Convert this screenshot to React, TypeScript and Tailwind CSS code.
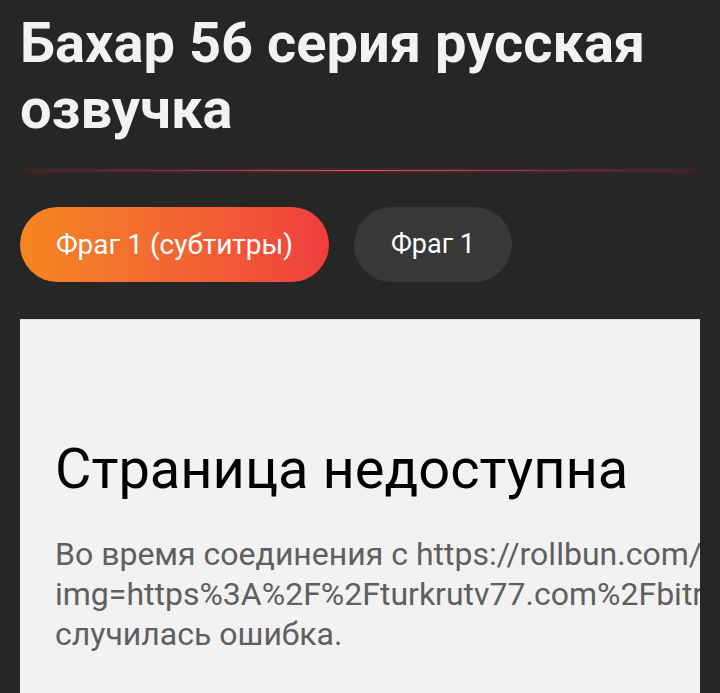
import React from 'react';

const tabs = [
  { label: 'Фраг 1 (субтитры)', active: true },
  { label: 'Фраг 1', active: false },
];

export default function App() {
  return (
    <div
      className="h-[693px] overflow-hidden bg-[#262626] px-5"
      style={{ fontFamily: 'Roboto, "Noto Sans", sans-serif' }}
    >
      <h1 className="pt-[10px] text-[56px] font-bold leading-[66px] text-[#f2f2f2]">
        Бахар 56 серия русская озвучка
      </h1>

      {/* red glow divider */}
      <div className="mt-[28px] px-1">
        <div className="h-px bg-gradient-to-r from-transparent via-[#e8575a] to-transparent shadow-[0_0_3px_1px_rgba(190,40,40,0.35)]" />
      </div>

      <div className="mt-[36px] flex gap-[25px]">
        {tabs.map((t) => (
          <button
            key={t.label}
            className={
              t.active
                ? 'h-[75px] rounded-full bg-gradient-to-r from-[#f5861f] to-[#ef3d3d] px-[36px] text-[28px] text-white'
                : 'h-[75px] rounded-full bg-[#383838] px-[37px] text-[27px] text-white'
            }
          >
            {t.label}
          </button>
        ))}
      </div>

      <div className="mt-[37px] h-[400px] overflow-hidden border-t border-[#dcdcdc] bg-[#f2f2f2] pl-[35px] pt-[117px]">
        <h2 className="whitespace-nowrap text-[56px] leading-[64px] text-black">
          Страница недоступна
        </h2>
        <div className="mt-[33px] whitespace-nowrap text-[32px] leading-[40px] text-[#5f5f5f]">
          <p>Во время соединения с https://rollbun.com/embed?</p>
          <p>img=https%3A%2F%2Fturkrutv77.com%2Fbitrix%2Ftemplates</p>
          <p>случилась ошибка.</p>
        </div>
      </div>
    </div>
  );
}
